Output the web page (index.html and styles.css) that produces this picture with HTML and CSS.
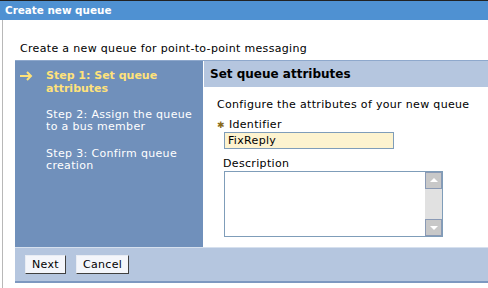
FILE: index.html
```html
<!DOCTYPE html>
<html lang="en">
<head>
    <meta charset="UTF-8">
    <title>Create new queue</title>
    <link rel="stylesheet" href="styles.css">
</head>
<body>
    <div class="titlebar">Create new queue</div>

    <div class="page">
        <p class="intro">Create a new queue for point-to-point messaging</p>

        <div class="wizard">
            <div class="steps">
                <div class="step current">
                    <svg class="arrow" width="13" height="10" viewBox="0 0 13 10">
                        <path d="M0 5H11M7 1L11 5L7 9" fill="none" stroke="#ffe27a" stroke-width="2"/>
                    </svg>
                    <span>Step 1: Set queue attributes</span>
                </div>
                <div class="step">Step 2: Assign the queue to a bus member</div>
                <div class="step">Step 3: Confirm queue creation</div>
            </div>

            <div class="panel">
                <div class="panel-head">Set queue attributes</div>
                <div class="panel-body">
                    <p class="lead">Configure the attributes of your new queue</p>

                    <div class="field">
                        <label class="req"><span class="star">&#10033;</span>Identifier</label>
                        <input class="text" type="text" value="FixReply">
                    </div>

                    <div class="field">
                        <label>Description</label>
                        <div class="textarea">
                            <div class="area"></div>
                            <div class="scroll">
                                <div class="sbtn up"></div>
                                <div class="track"></div>
                                <div class="sbtn down"></div>
                            </div>
                        </div>
                    </div>
                </div>
            </div>
        </div>

        <div class="buttons">
            <button class="btn">Next</button>
            <button class="btn">Cancel</button>
        </div>
    </div>
</body>
</html>
```

FILE: styles.css
```css
body {
    margin: 0;
    font-family: "DejaVu Sans", Verdana, sans-serif;
    font-size: 11px;
    letter-spacing: 0.33px;
    color: #000;
    background: #fff;
}
.titlebar {
    border-top: 1px solid #222;
    background: #4f91d2;
    color: #fff;
    font-weight: bold;
    font-size: 10.4px;
    letter-spacing: 0;
    height: 19px;
    line-height: 19px;
    padding-left: 5px;
}
.page {
    margin-left: 2px;
    border-left: 1px solid #b8b8b8;
    padding-left: 12px;
    padding-bottom: 5px;
}
.intro {
    margin: 0;
    padding: 22px 0 0 5px;
    height: 18px;
}
.wizard {
    display: grid;
    grid-template-columns: 188px 1fr;
    border-top: 1px solid #8ea8cc;
    height: 186px;
}
.steps {
    background: #7090bb;
    color: #fff;
    padding: 8px 4px 0 31px;
    line-height: 12px;
}
.step {
    margin-bottom: 15px;
}
.step.current {
    color: #ffe27a;
    font-weight: bold;
    letter-spacing: 0;
    line-height: 13px;
    position: relative;
    margin-bottom: 14px;
}
.arrow {
    position: absolute;
    left: -26px;
    top: 2px;
}
.panel-head {
    background: #b5c6df;
    font-weight: bold;
    font-size: 12px;
    letter-spacing: 0;
    height: 26px;
    line-height: 26px;
    padding-left: 6px;
    border-left: 1px solid #fff;
}
.panel-body {
    padding: 11px 0 0 14px;
}
.lead {
    margin: 0 0 7px;
}
.field {
    display: flex;
    flex-direction: column;
    align-items: flex-start;
    margin-bottom: 8px;
}
.field label {
    padding-left: 6px;
    line-height: 14px;
}
.field label.req {
    padding-left: 0;
}
.star {
    color: #8a6b1a;
    font-size: 9px;
    margin-right: 4px;
}
.text {
    margin: 0 0 0 7px;
    width: 170px;
    height: 17px;
    box-sizing: border-box;
    border: 1px solid #7f9db9;
    background: #fdf3cf;
    font: inherit;
    letter-spacing: inherit;
    padding: 0 3px;
}
.textarea {
    margin-left: 7px;
    width: 219px;
    height: 66px;
    box-sizing: border-box;
    border: 1px solid #7f9db9;
    display: flex;
}
.area {
    flex: 1;
}
.scroll {
    width: 17px;
    display: flex;
    flex-direction: column;
    background: #e1e1e1;
}
.track {
    flex: 1;
}
.sbtn {
    height: 15px;
    background: #c8c8c8;
    border: 1px solid #8a9ab5;
    position: relative;
}
.sbtn::after {
    content: "";
    position: absolute;
    left: 4px;
    border-left: 4px solid transparent;
    border-right: 4px solid transparent;
}
.up::after {
    top: 5px;
    border-bottom: 4px solid #fff;
}
.down::after {
    top: 6px;
    border-top: 4px solid #fff;
}
.buttons {
    background: #b5c6df;
    border-top: 1px solid #d6e0ee;
    border-bottom: 2px solid #7d98c0;
    height: 33px;
    display: flex;
    align-items: center;
    gap: 10px;
    padding-left: 10px;
}
.btn {
    font: inherit;
    letter-spacing: inherit;
    background: #f4f6fb;
    border: 1px solid;
    border-color: #e8ecf3 #404040 #404040 #e8ecf3;
    height: 19px;
    padding: 0 6px;
    line-height: 15px;
}
```
